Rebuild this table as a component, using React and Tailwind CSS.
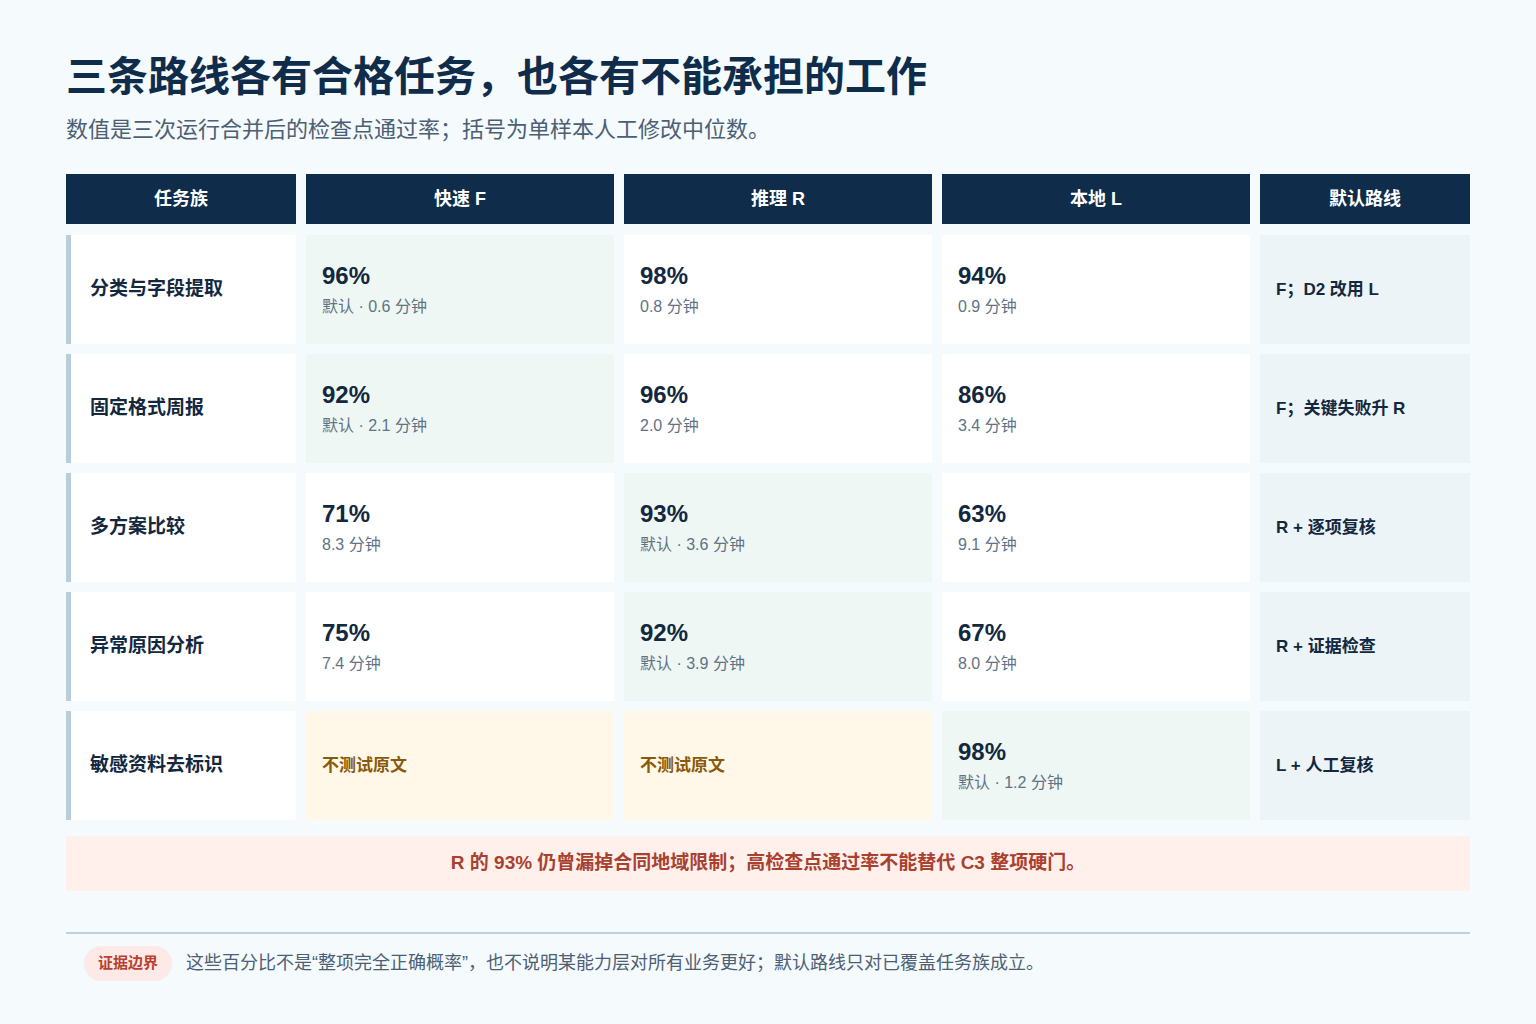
import React from 'react';

const FONT = { fontFamily: '"Liberation Sans", "Noto Sans CJK SC", sans-serif' };

const columns = ['任务族', '快速 F', '推理 R', '本地 L', '默认路线'];

// kind: 'ok' = green default cell, 'plain' = white, 'skip' = yellow untested
const rows = [
  {
    name: '分类与字段提取',
    cells: [
      { kind: 'ok', pct: '96%', note: '默认 · 0.6 分钟' },
      { kind: 'plain', pct: '98%', note: '0.8 分钟' },
      { kind: 'plain', pct: '94%', note: '0.9 分钟' },
    ],
    route: 'F；D2 改用 L',
  },
  {
    name: '固定格式周报',
    cells: [
      { kind: 'ok', pct: '92%', note: '默认 · 2.1 分钟' },
      { kind: 'plain', pct: '96%', note: '2.0 分钟' },
      { kind: 'plain', pct: '86%', note: '3.4 分钟' },
    ],
    route: 'F；关键失败升 R',
  },
  {
    name: '多方案比较',
    cells: [
      { kind: 'plain', pct: '71%', note: '8.3 分钟' },
      { kind: 'ok', pct: '93%', note: '默认 · 3.6 分钟' },
      { kind: 'plain', pct: '63%', note: '9.1 分钟' },
    ],
    route: 'R + 逐项复核',
  },
  {
    name: '异常原因分析',
    cells: [
      { kind: 'plain', pct: '75%', note: '7.4 分钟' },
      { kind: 'ok', pct: '92%', note: '默认 · 3.9 分钟' },
      { kind: 'plain', pct: '67%', note: '8.0 分钟' },
    ],
    route: 'R + 证据检查',
  },
  {
    name: '敏感资料去标识',
    cells: [
      { kind: 'skip' },
      { kind: 'skip' },
      { kind: 'ok', pct: '98%', note: '默认 · 1.2 分钟' },
    ],
    route: 'L + 人工复核',
  },
];

const cellBg = {
  ok: 'bg-[#eef7f3]',
  plain: 'bg-white',
  skip: 'bg-[#fff7e8]',
};

const ScoreCell = ({ cell }) => (
  <div className={`flex flex-col justify-center px-4 ${cellBg[cell.kind]}`}>
    {cell.kind === 'skip' ? (
      <span className="text-[17px] font-bold text-[#8a5a0b]">不测试原文</span>
    ) : (
      <>
        <span className="text-[24px] leading-[28px] font-semibold text-[#13283f]">{cell.pct}</span>
        <span className="mt-[6px] text-[16px] leading-[22px] text-[#5f7286]">
          {cell.note.split(' · ').join('\u00a0·\u00a0')}
        </span>
      </>
    )}
  </div>
);

export default function App() {
  return (
    <div className="min-h-screen bg-[#f5fafc] px-[66px] pt-[50px] pb-10" style={FONT}>
      <h1 className="text-[41px] leading-[54px] font-bold text-[#0f2d4a]">
        三条路线各有合格任务，也各有不能承担的工作
      </h1>
      <p className="mt-3 text-[22px] leading-[28px] text-[#4b6075]">
        数值是三次运行合并后的检查点通过率；括号为单样本人工修改中位数。
      </p>

      {/* Table */}
      <div className="mt-[30px] grid grid-cols-[230px_308px_308px_308px_210px] gap-x-[10px]">
        {columns.map((c) => (
          <div
            key={c}
            className="flex h-[50px] items-center justify-center bg-[#0f2d4a] text-[18px] font-bold text-white"
          >
            {c}
          </div>
        ))}
      </div>

      <div className="mt-[11px] grid grid-cols-[230px_308px_308px_308px_210px] auto-rows-[109px] gap-x-[10px] gap-y-[10px]">
        {rows.map((r) => (
          <React.Fragment key={r.name}>
            <div className="flex items-center border-l-[5px] border-[#b8cedc] bg-white pl-[19px]">
              <span className="text-[19px] font-bold text-[#13283f]">{r.name}</span>
            </div>
            {r.cells.map((cell, i) => (
              <ScoreCell key={i} cell={cell} />
            ))}
            <div className="flex items-center bg-[#edf4f8] px-4">
              <span className="text-[17px] font-bold text-[#13283f]">{r.route}</span>
            </div>
          </React.Fragment>
        ))}
      </div>

      {/* Callout */}
      <div className="mt-4 flex h-[55px] items-center justify-center bg-[#fff0ec] text-[19px] font-bold text-[#a9412f]">
        R 的 93% 仍曾漏掉合同地域限制；高检查点通过率不能替代 C3 整项硬门。
      </div>

      {/* Footer */}
      <div className="mt-[41px] border-t-2 border-[#bdd1df] pt-[12px]">
        <div className="flex items-center gap-[14px] pl-[18px]">
          <span className="flex h-[35px] items-center rounded-full bg-[#fde9e5] px-[14px] text-[15px] font-bold text-[#b8402e]">
            证据边界
          </span>
          <span className="text-[18px] text-[#4b6075]">
            这些百分比不是“整项完全正确概率”，也不说明某能力层对所有业务更好；默认路线只对已覆盖任务族成立。
          </span>
        </div>
      </div>
    </div>
  );
}
